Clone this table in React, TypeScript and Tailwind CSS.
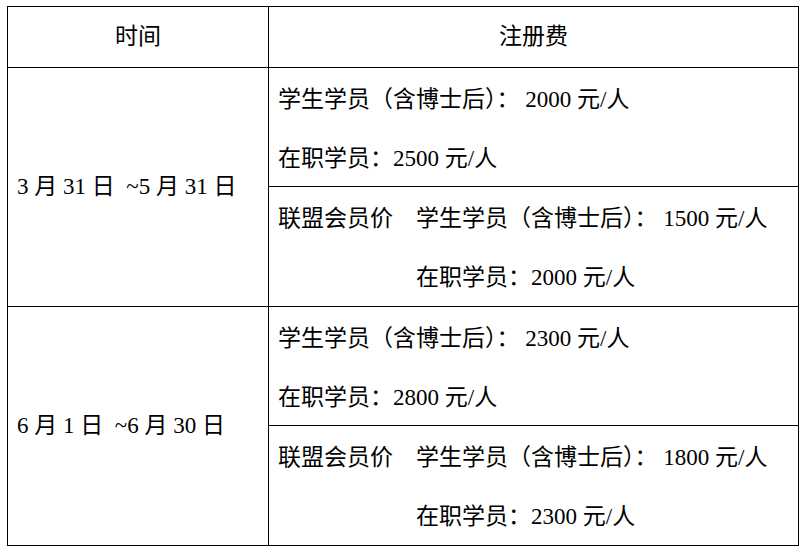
import React from 'react';

type Block = {
  date: string;
  normal: [string, string];
  member: [string, string];
};

const blocks: Block[] = [
  {
    date: '3 月 31 日  ~5 月 31 日',
    normal: ['学生学员（含博士后）： 2000 元/人', '在职学员：2500 元/人'],
    member: ['学生学员（含博士后）： 1500 元/人', '在职学员：2000 元/人'],
  },
  {
    date: '6 月 1 日  ~6 月 30 日',
    normal: ['学生学员（含博士后）： 2300 元/人', '在职学员：2800 元/人'],
    member: ['学生学员（含博士后）： 1800 元/人', '在职学员：2300 元/人'],
  },
];

const App: React.FC = () => {
  return (
    <div
      className="w-[804px] h-[550px] bg-white text-black pt-[6px] pl-[7px] text-[23px]"
      style={{ fontFamily: '"Liberation Serif", "Noto Sans CJK SC", serif' }}
    >
      <div className="w-[792px] border border-black">
        {/* Header */}
        <div className="flex h-[61px] border-b border-black">
          <div className="w-[261px] border-r border-black flex items-center justify-center">时间</div>
          <div className="flex-1 flex items-center justify-center">注册费</div>
        </div>

        {blocks.map((b, i) => (
          <div key={i} className={`flex ${i === 0 ? 'border-b border-black' : ''}`}>
            <div className="w-[261px] border-r border-black flex items-center pl-[9px] whitespace-pre">
              {b.date}
            </div>
            <div className="flex-1 flex flex-col">
              <div className="h-[119px] border-b border-black pl-[9px] pt-[2px] leading-[59px] whitespace-pre">
                <div>{b.normal[0]}</div>
                <div>{b.normal[1]}</div>
              </div>
              <div className="h-[119px] pl-[9px] pt-[2px] leading-[59px] flex whitespace-pre">
                <div className="w-[138px]">联盟会员价</div>
                <div>
                  <div>{b.member[0]}</div>
                  <div>{b.member[1]}</div>
                </div>
              </div>
            </div>
          </div>
        ))}
      </div>
    </div>
  );
};

export default App;
